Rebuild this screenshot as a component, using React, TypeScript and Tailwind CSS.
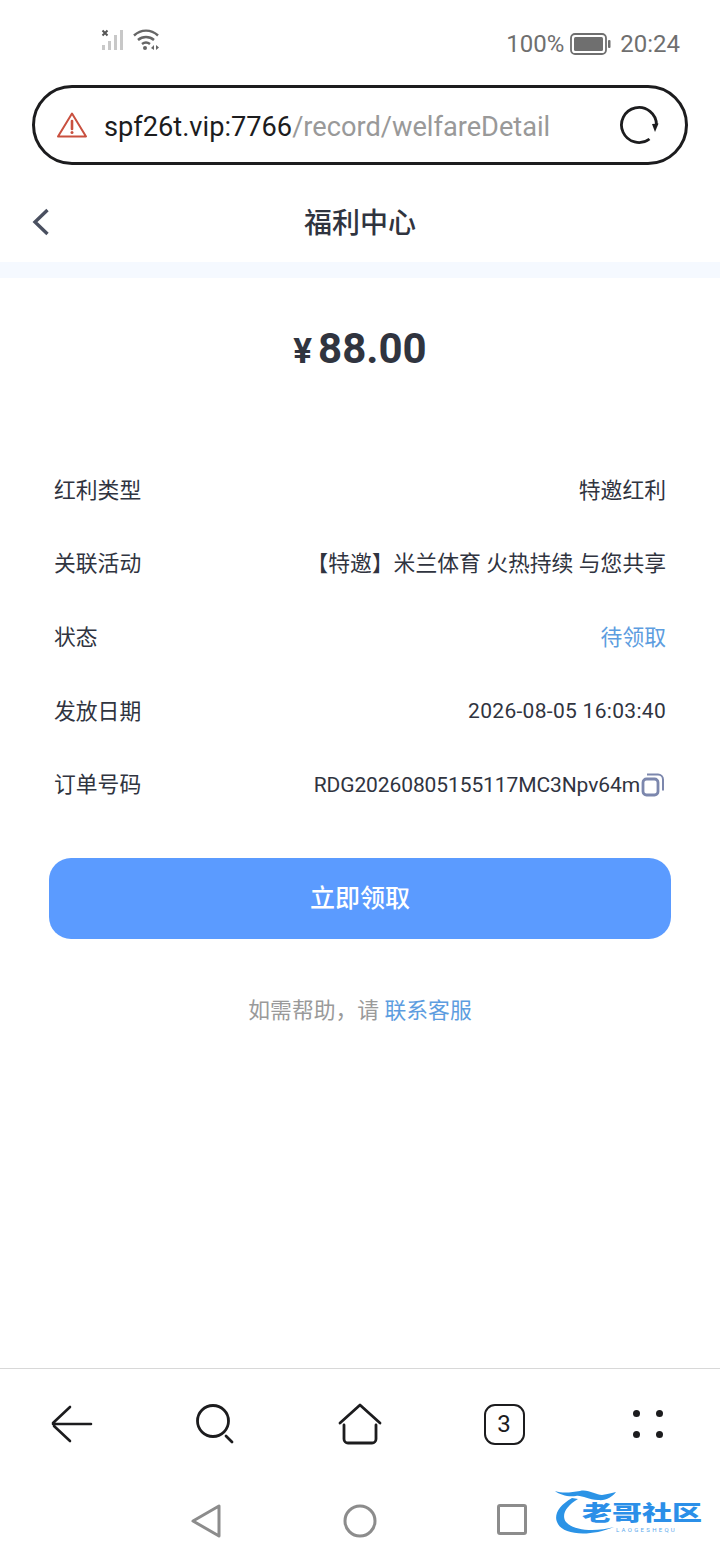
const cjk = "font-['Roboto','Noto_Sans_CJK_SC',sans-serif]";

const rows = [
  { label: "红利类型", value: "特邀红利" },
  { label: "关联活动", value: "【特邀】米兰体育 火热持续 与您共享" },
  { label: "状态", value: "待领取", blue: true },
  { label: "发放日期", value: "2026-08-05 16:03:40", mono: "text-[21px] tracking-[0.300px]" },
  { label: "订单号码", value: "RDG20260805155117MC3Npv64m", copy: true, mono: "text-[21px] tracking-[-0.100px]" },
];

const StatusBar = () => (
  <div className="flex h-[85px] items-start justify-between pl-[101px] pr-[40px] pt-[28px]">
    <div className="-mt-[1px] flex items-center gap-[6px]">
      <svg width="25" height="24" viewBox="0 0 25 24">
        <path d="M1.500 3.500l5 5M6.500 3.500l-5 5" stroke="#555" strokeWidth="2" />
        <g fill="#c8c8c8">
          <rect x="1" y="18" width="3" height="5" />
          <rect x="7" y="14" width="3" height="9" />
          <rect x="13" y="8" width="3" height="15" />
          <rect x="19" y="3" width="3" height="20" />
        </g>
      </svg>
      <svg width="28" height="24" viewBox="0 0 28 24" fill="none" stroke="#666" strokeWidth="2.400">
        <path d="M2 8.500C9 2 19 2 26 8.500" />
        <path d="M6 13c4.500-4 11.500-4 16 0" />
        <path d="M10 17c2.500-2 5.500-2 8 0" />
        <circle cx="13" cy="21" r="2" fill="#666" stroke="none" />
        <path d="M19 21l3-3v5zM24 18v5l3-2.500z" fill="#666" stroke="none" />
      </svg>
    </div>
    <div className="flex items-center text-[24px] leading-[32px] text-[#6f6f6f] font-['Roboto',sans-serif]">
      <span>100%</span>
      <svg className="ml-[6px] mr-[9px]" width="41" height="22" viewBox="0 0 41 22">
        <rect x="1" y="1" width="35" height="20" rx="4" fill="none" stroke="#6f6f6f" strokeWidth="1.800" />
        <rect x="4" y="4" width="29" height="14" rx="1.500" fill="#6f6f6f" />
        <rect x="38" y="7" width="2.500" height="8" rx="1" fill="#6f6f6f" />
      </svg>
      <span>20:24</span>
    </div>
  </div>
);

const UrlBar = () => (
  <div className="mx-[32px] flex h-[80px] items-center rounded-full border-[3px] border-[#1c1c1e] pl-[21px] pr-[26px]">
    <svg width="32" height="28" viewBox="0 0 32 28" fill="none">
      <path d="M16 2.500L30 25.500H2z" stroke="#c9503f" strokeWidth="2" strokeLinejoin="round" />
      <path d="M16 10v8" stroke="#c9503f" strokeWidth="2.600" strokeLinecap="round" />
      <circle cx="16" cy="21.500" r="1.500" fill="#c9503f" />
    </svg>
    <div className="ml-[16px] mt-[3px] flex-1 text-[27.200px] leading-[40px] font-['Roboto',sans-serif] text-[#999999]">
      <span className="text-[#1c1c1e]">spf26t.vip:7766</span>/record/welfareDetail
    </div>
    <svg width="40" height="40" viewBox="0 0 40 40" fill="none">
      <path d="M30.500 34A17.500 17.500 0 1 1 37.500 20" stroke="#1c1c1e" strokeWidth="2.800" />
      <path d="M33 19l6.500-.5L36 27z" fill="#1c1c1e" />
    </svg>
  </div>
);

const Header = () => (
  <div className="relative flex h-[97px] items-center justify-center">
    <svg className="absolute left-[32px] top-[43px]" width="18" height="28" viewBox="0 0 18 28" fill="none">
      <path d="M15.500 2L3 14l12.500 12" stroke="#4a5060" strokeWidth="3.400" />
    </svg>
    <span className={`mt-[20px] text-[28px] font-medium text-[#30343f] ${cjk}`}>福利中心</span>
  </div>
);

const Detail = ({ label, value, blue, copy, mono }: { label: string; value: string; blue?: boolean; copy?: boolean; mono?: string }) => (
  <div className={`flex h-[73.700px] items-center justify-between text-[21.800px] ${cjk}`}>
    <span className="text-[#30343f]">{label}</span>
    <span className={`flex items-center ${mono ?? ""} ${blue ? "text-[#5d9de0]" : "text-[#30343f]"}`}>
      {value}
      {copy && (
        <svg className="-mt-[3px]" width="26" height="26" viewBox="0 0 26 26" fill="none" stroke="#7c87ad" strokeWidth="2.800">
          <rect x="3" y="8" width="15" height="16" rx="3.500" />
          <path d="M7 3.500h11a5 5 0 0 1 5 5v11" strokeWidth="2" />
        </svg>
      )}
    </span>
  </div>
);

const BottomNav = () => (
  <div className="grid h-[113px] grid-cols-5 items-center justify-items-center border-t border-[#d8d8d8] pb-[2px]">
    <svg width="44" height="40" viewBox="0 0 44 40" fill="none" stroke="#1c1c1e" strokeWidth="2.600" strokeLinecap="round">
      <path d="M3 20h38M20 3L3 19M4 22l16 15" />
    </svg>
    <svg width="40" height="40" viewBox="0 0 40 40" fill="none" stroke="#1c1c1e" strokeWidth="2.800" strokeLinecap="round">
      <circle cx="17" cy="17" r="15.500" />
      <path d="M30 32l6 6" />
    </svg>
    <svg width="44" height="42" viewBox="0 0 44 42" fill="none" stroke="#1c1c1e" strokeWidth="2.800" strokeLinecap="round" strokeLinejoin="round">
      <path d="M2 20L22 2l20 18" />
      <path d="M6 22v14a4 4 0 0 0 4 4h24a4 4 0 0 0 4-4V22" />
    </svg>
    <div className="flex h-[41px] w-[41px] items-center justify-center rounded-[11px] border-[2.500px] border-[#1c1c1e] text-[24px] text-[#1c1c1e] font-['Roboto',sans-serif]">
      3
    </div>
    <div className="grid grid-cols-2 gap-x-[16px] gap-y-[14px]">
      <span className="h-[7px] w-[7px] rounded-full bg-[#1c1c1e]" />
      <span className="h-[7px] w-[7px] rounded-full bg-[#1c1c1e]" />
      <span className="h-[7px] w-[7px] rounded-full bg-[#1c1c1e]" />
      <span className="h-[7px] w-[7px] rounded-full bg-[#1c1c1e]" />
    </div>
  </div>
);

const Watermark = () => (
  <div className="absolute left-[52px] top-[-21px] h-[55px] w-[155px]">
    <svg className="absolute left-0 top-0" width="155" height="55" viewBox="0 0 155 55" fill="none">
      <path d="M20 12C6 20 1 30 6 38c6 11 32 13 56 3-18 5-40 4-48-5-5-7 0-16 12-23z" fill="#2b93e6" />
      <path d="M3 5c9 3 17 1 25 0 8-2 16 4 22 4 6-1 10-2 14-3-4 5-10 9-18 8-10 0-16-5-22-4-8 1-16-1-21-5z" fill="#2b93e6" />
    </svg>
    <span className={`absolute left-[30px] top-[15px] origin-top-left scale-y-70 whitespace-nowrap text-[30px] leading-[34px] font-black text-[#2b8fe8] ${cjk}`}>老哥社区</span>
    <span className="absolute left-[64px] top-[40px] whitespace-nowrap text-[6px] leading-[7px] tracking-[2.300px] text-[#5aa9ec] font-['Roboto',sans-serif]">LAOGESHEQU</span>
  </div>
);

const SystemNav = () => (
  <div className="flex h-[79px] items-start justify-between pl-[190px] pr-[193px] pt-[23px]">
    <svg width="32" height="34" viewBox="0 0 32 34" fill="none" stroke="#8c8c8c" strokeWidth="3" strokeLinejoin="round">
      <path d="M29 2v30L3 17z" />
    </svg>
    <svg width="34" height="34" viewBox="0 0 34 34" fill="none" stroke="#8c8c8c" strokeWidth="3">
      <circle cx="17" cy="17" r="15" />
    </svg>
    <div className="relative h-[31px] w-[30px] rounded-[3px] border-[3px] border-[#8c8c8c]">
      <Watermark />
    </div>
  </div>
);

export default function App() {
  return (
    <div className="flex h-[1560px] w-[720px] flex-col overflow-hidden bg-white">
      <StatusBar />
      <UrlBar />
      <Header />
      <div className="h-[16px] bg-[#f5f9ff]" />
      <main className="flex-1">
        <div className="flex h-[139px] items-center justify-center pt-[2px] text-[#30343f] font-['Roboto',sans-serif]">
          <span className="mr-[6px] mt-[8px] text-[35px] font-bold">¥</span>
          <span className="text-[42px] font-bold">88.00</span>
        </div>
        <div className="px-[54px] pt-[37px]">
          {rows.map((r) => (
            <Detail key={r.label} {...r} />
          ))}
        </div>
        <div className="mx-[49px] mt-[36px] flex h-[81px] items-center justify-center rounded-[22px] bg-[#5b9bff]">
          <span className={`text-[25px] font-medium text-white ${cjk}`}>立即领取</span>
        </div>
        <p className={`mt-[56px] text-center text-[21.800px] leading-[32px] text-[#9a9a9a] ${cjk}`}>
          如需帮助，请 <span className="text-[#5d9de0]">联系客服</span>
        </p>
      </main>
      <BottomNav />
      <SystemNav />
    </div>
  );
}
